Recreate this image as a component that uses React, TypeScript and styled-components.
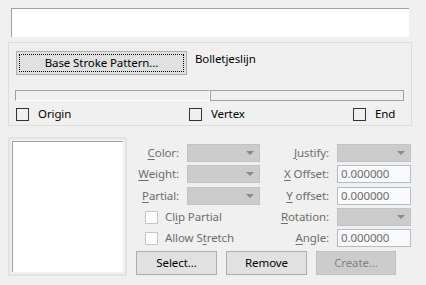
import React from "react";
import styled, { createGlobalStyle } from "styled-components";

const GlobalStyle = createGlobalStyle`
  html, body {
    margin: 0;
    padding: 0;
    background: #f0f0f0;
    font-family: "Noto Sans", "Liberation Sans", sans-serif;
    font-size: 11.5px;
    letter-spacing: -0.1px;
    color: #000;
  }
`;

const Page = styled.div`
  width: 426px;
  height: 285px;
  box-sizing: border-box;
  padding: 8px 14px 0 8px;
  display: flex;
  flex-direction: column;
  overflow: hidden;
`;

const NameBox = styled.div`
  margin: 0 3px;
  height: 29px;
  background: #fff;
  border-top: 1px solid #a0a0a0;
  border-left: 1px solid #a0a0a0;
  box-sizing: border-box;
`;

const Group = styled.div`
  margin-top: 5px;
  height: 84px;
  box-sizing: border-box;
  border: 1px solid #dcdcdc;
  padding: 8px 7px 0 7px;
  display: flex;
  flex-direction: column;
`;

const PatternRow = styled.div`
  display: flex;
  align-items: flex-start;
  gap: 8px;
`;

const Button = styled.button<{ $w: number; $h?: number; $focus?: boolean }>`
  width: ${(p) => p.$w}px;
  height: ${(p) => p.$h ?? 24}px;
  box-sizing: border-box;
  margin: 0;
  padding: 0 0 1px;
  font: inherit;
  letter-spacing: inherit;
  color: #000;
  background: #e1e1e1;
  border: 1px solid #adadad;
  outline: ${(p) => (p.$focus ? "1px dotted #000" : "none")};
  outline-offset: -4px;
  &:disabled {
    color: #838383;
    background: #cccccc;
    border-color: #bfbfbf;
  }
`;

const PatternName = styled.span`
  line-height: 16px;
`;

const Bar = styled.div`
  margin: 15px 0 0 -1px;
  height: 11px;
  display: flex;
`;

const BarDone = styled.div`
  width: 195px;
  box-sizing: border-box;
  border-top: 1px solid #a0a0a0;
  border-left: 1px solid #a0a0a0;
  border-right: 1px solid #fff;
  border-bottom: 1px solid #fff;
`;

const BarRest = styled.div`
  flex: 1;
  box-sizing: border-box;
  border: 1px solid #a0a0a0;
`;

const CheckRow = styled.div`
  margin-top: 6px;
  display: grid;
  grid-template-columns: 173px 164px auto;
`;

const Check = styled.label<{ $off?: boolean }>`
  display: flex;
  align-items: center;
  gap: ${(p) => (p.$off ? 7 : 9)}px;
  color: ${(p) => (p.$off ? "#6d6d6d" : "#000")};
  line-height: 14px;
`;

const Box = styled.span<{ $off?: boolean }>`
  width: 13px;
  height: 13px;
  box-sizing: border-box;
  flex: none;
  border: 1px solid ${(p) => (p.$off ? "#c6c6c6" : "#333")};
  background: ${(p) => (p.$off ? "#fff" : "#f0f0f0")};
`;

const Lower = styled.div`
  margin-top: 11px;
  display: flex;
  gap: 9px;
`;

const ListFrame = styled.div`
  width: 119px;
  height: 139px;
  box-sizing: border-box;
  border: 2px solid #e2e2e2;
  padding: 2px;
  flex: none;
`;

const ListInner = styled.div`
  height: 100%;
  box-sizing: border-box;
  background: #fff;
  border-top: 1px solid #a0a0a0;
  border-left: 1px solid #a0a0a0;
`;

const Side = styled.div`
  padding-top: 5px;
  display: flex;
  flex-direction: column;
`;

const Form = styled.div`
  display: grid;
  grid-template-columns: 51px 73px 77px 74px;
  grid-template-rows: 21px 22px 21px 22px 20px;
  align-items: center;
`;

const Label = styled.span`
  text-align: right;
  padding-right: 8px;
  color: #6d6d6d;
  white-space: nowrap;
  line-height: 14px;
`;

const Key = styled.span`
  text-decoration: underline;
  text-underline-offset: 2px;
`;

const Combo = styled.div`
  height: 18px;
  box-sizing: border-box;
  background: #cccccc;
  border: 1px solid #c2c2c2;
  display: flex;
  align-items: center;
  justify-content: flex-end;
  padding-right: 5px;
`;

const Arrow = styled.span`
  width: 0;
  height: 0;
  border-left: 4px solid transparent;
  border-right: 4px solid transparent;
  border-top: 4px solid #888;
`;

const Field = styled.div`
  height: 18px;
  box-sizing: border-box;
  background: #fafafa;
  border: 1px solid #a9bdd8;
  padding: 0 3px;
  color: #6d6d6d;
  line-height: 15px;
`;

const CheckCell = styled.div`
  grid-column: 1 / span 2;
  padding-left: 9px;
`;

const Buttons = styled.div`
  margin-top: 3px;
  display: flex;
  gap: 9px;
`;

function Dropdown() {
  return (
    <Combo>
      <Arrow />
    </Combo>
  );
}

export default function App() {
  return (
    <>
      <GlobalStyle />
      <Page>
        <NameBox />
        <Group>
          <PatternRow>
            <Button $w={171} $h={24} $focus>
              Base Stroke Pattern...
            </Button>
            <PatternName>Bolletjeslijn</PatternName>
          </PatternRow>
          <Bar>
            <BarDone />
            <BarRest />
          </Bar>
          <CheckRow>
            <Check>
              <Box />
              Origin
            </Check>
            <Check>
              <Box />
              Vertex
            </Check>
            <Check>
              <Box />
              End
            </Check>
          </CheckRow>
        </Group>
        <Lower>
          <ListFrame>
            <ListInner />
          </ListFrame>
          <Side>
            <Form>
              <Label>
                <Key>C</Key>olor:
              </Label>
              <Dropdown />
              <Label>
                <Key>J</Key>ustify:
              </Label>
              <Dropdown />

              <Label>
                <Key>W</Key>eight:
              </Label>
              <Dropdown />
              <Label>
                <Key>X</Key> Offset:
              </Label>
              <Field>0.000000</Field>

              <Label>
                <Key>P</Key>artial:
              </Label>
              <Dropdown />
              <Label>
                <Key>Y</Key> offset:
              </Label>
              <Field>0.000000</Field>

              <CheckCell>
                <Check $off>
                  <Box $off />
                  <span>
                    Cl<Key>i</Key>p Partial
                  </span>
                </Check>
              </CheckCell>
              <Label>
                <Key>R</Key>otation:
              </Label>
              <Dropdown />

              <CheckCell>
                <Check $off>
                  <Box $off />
                  <span>
                    Allow S<Key>t</Key>retch
                  </span>
                </Check>
              </CheckCell>
              <Label>
                <Key>A</Key>ngle:
              </Label>
              <Field>0.000000</Field>
            </Form>
            <Buttons>
              <Button $w={81}>Select...</Button>
              <Button $w={81}>Remove</Button>
              <Button $w={80} disabled>
                Create...
              </Button>
            </Buttons>
          </Side>
        </Lower>
      </Page>
    </>
  );
}
